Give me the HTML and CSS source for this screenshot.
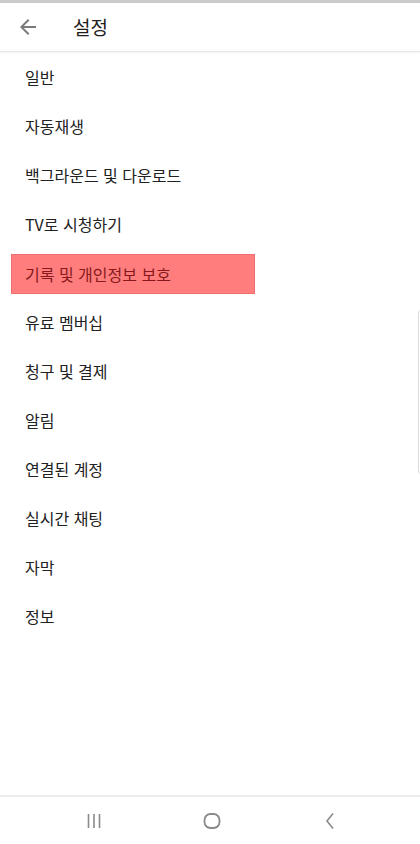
FILE: index.html
```html
<!DOCTYPE html>
<html lang="ko">
<head>
<meta charset="utf-8">
<link rel="stylesheet" href="styles.css">
</head>
<body>
<div class="screen">
  <div class="status"></div>
  <header class="bar">
    <svg class="back" width="24" height="24" viewBox="0 0 24 24"><path d="M20 11H7.83l5.59-5.59L12 4l-8 8 8 8 1.41-1.41L7.83 13H20v-2z" fill="#7a7a7a"/></svg>
    <h1 class="title">설정</h1>
  </header>
  <ul class="list">
    <li class="item">일반</li>
    <li class="item">자동재생</li>
    <li class="item">백그라운드 및 다운로드</li>
    <li class="item">TV로 시청하기</li>
    <li class="item"><span class="hl">기록 및 개인정보 보호</span></li>
    <li class="item">유료 멤버십</li>
    <li class="item">청구 및 결제</li>
    <li class="item">알림</li>
    <li class="item">연결된 계정</li>
    <li class="item">실시간 채팅</li>
    <li class="item">자막</li>
    <li class="item">정보</li>
  </ul>
  <div class="edge"></div>
  <nav class="nav">
    <svg width="18" height="18" viewBox="0 0 18 18"><g stroke="#8a8a8a" stroke-width="1.6"><line x1="3.5" y1="2" x2="3.5" y2="16"/><line x1="9" y1="2" x2="9" y2="16"/><line x1="14.5" y1="2" x2="14.5" y2="16"/></g></svg>
    <svg width="18" height="18" viewBox="0 0 18 18"><rect x="1.5" y="2" width="15" height="14" rx="6" fill="none" stroke="#8a8a8a" stroke-width="1.8"/></svg>
    <svg width="18" height="18" viewBox="0 0 18 18"><polyline points="12,1.5 6,9 12,16.5" fill="none" stroke="#8a8a8a" stroke-width="1.6"/></svg>
  </nav>
</div>
</body>
</html>
```

FILE: styles.css
```css
* { box-sizing: border-box; }
html, body { margin: 0; padding: 0; background: #fff; }
body {
  font-family: "Noto Sans CJK KR", "Noto Sans", sans-serif;
  color: #212121;
}
.screen {
  position: relative;
  width: 420px;
  height: 844px;
  display: flex;
  flex-direction: column;
  overflow: hidden;
}
.status { height: 3px; background: #cbcbcb; flex: none; }
.bar {
  height: 49px;
  flex: none;
  display: flex;
  align-items: center;
  padding-left: 16px;
  border-bottom: 1px solid #e8e8e8;
  box-shadow: 0 1px 2px rgba(0,0,0,0.06);
}
.back { display: block; }
.title {
  margin: 0 0 0 33px;
  font-size: 19px;
  font-weight: 400;
  color: #1e1e1e;
  line-height: 1;
  position: relative;
  top: -1px;
}
.list {
  list-style: none;
  margin: 0;
  padding: 0;
  flex: 1;
}
.item {
  height: 49px;
  display: flex;
  align-items: center;
  padding-left: 25px;
  font-size: 16px;
  line-height: 1;
}
.item .hl {
  display: flex;
  align-items: center;
  margin-left: -14px;
  padding-left: 13px;
  width: 244px;
  height: 40px;
  margin-top: 3px;
  background: #ff7d7d;
  border: 1px solid #f07070;
  color: #86191b;
}
.edge {
  position: absolute;
  right: -4px;
  top: 310px;
  width: 6px;
  height: 164px;
  border: 1px solid #dcdcdc;
  border-radius: 4px;
}
.nav {
  height: 49px;
  flex: none;
  border-top: 2px solid #ebebeb;
  display: flex;
  align-items: center;
  gap: 100px;
  padding-left: 85px;
}
.nav svg { display: block; }
```
